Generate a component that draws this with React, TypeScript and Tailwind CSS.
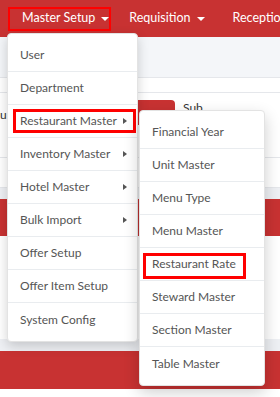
import React from "react";

const font = { fontFamily: "Lato, 'Noto Sans', sans-serif" };

function DownCaret() {
  return (
    <span className="ml-[6px] inline-block w-0 h-0 border-l-[4px] border-r-[4px] border-t-[4px] border-l-transparent border-r-transparent border-t-white" />
  );
}

function RightCaret() {
  return (
    <span className="inline-block w-0 h-0 border-t-[3.5px] border-b-[3.5px] border-l-[4px] border-t-transparent border-b-transparent border-l-[#555]" />
  );
}

const mainItems: { label: string; sub?: boolean; hl?: boolean }[] = [
  { label: "User" },
  { label: "Department" },
  { label: "Restaurant Master", sub: true, hl: true },
  { label: "Inventory Master", sub: true },
  { label: "Hotel Master", sub: true },
  { label: "Bulk Import", sub: true },
  { label: "Offer Setup" },
  { label: "Offer Item Setup" },
  { label: "System Config" },
];

const subItems: { label: string; hl?: boolean }[] = [
  { label: "Financial Year" },
  { label: "Unit Master" },
  { label: "Menu Type" },
  { label: "Menu Master" },
  { label: "Restaurant Rate", hl: true },
  { label: "Steward Master" },
  { label: "Section Master" },
  { label: "Table Master" },
];

export default function App() {
  return (
    <div className="relative w-[280px] h-[397px] overflow-hidden bg-white" style={font}>
      {/* navbar */}
      <div className="h-[37px] bg-[#c83232] flex items-center text-white text-[12.5px] whitespace-nowrap">
        <div className="ml-[8px] w-[109px] h-[24px] border-2 border-[#ff0000] flex items-center pl-[12px]">
          Master Setup
          <DownCaret />
        </div>
        <div className="ml-[18px] flex items-center">
          Requisition
          <DownCaret />
        </div>
        <div className="ml-[28px]">Reception</div>
      </div>
      {/* content background */}
      <div className="h-[40px] bg-[#f4f6f9]" />
      <div className="h-[16px] border-t border-b border-[#e5e7eb] bg-white" />
      <div className="h-[65px] bg-white border-b border-[#e5e7eb] flex items-start text-[12px] text-[#333]">
        <div className="mt-[13px] w-[130px]">ur</div>
        <div className="mt-[7px] w-[45px] h-[25px] bg-[#c83232] rounded-tr-sm" />
        <div className="mt-[6px] ml-[8px]">Sub</div>
      </div>
      <div className="h-[30px] bg-white border-b border-[#e5e7eb]" />
      <div className="h-[11px] bg-[#eef0f4]" />
      <div className="h-[37px] bg-[#c83232]" />
      <div className="h-[103px] bg-white" />
      <div className="h-[12px] bg-[#eef0f4]" />
      <div className="h-[38px] bg-[#c83232]" />

      {/* main dropdown */}
      <div className="absolute left-[7px] top-[33px] w-[131px] py-[5px] bg-white rounded-[4px] border border-[#e3e3e3] shadow-[0_4px_12px_rgba(0,0,0,0.18)]">
        {mainItems.map((it, i) => (
          <div
            key={it.label}
            className={
              "relative h-[33px] flex items-center pl-[12px] pr-[10px] text-[12px] text-[#555] whitespace-nowrap " +
              (i < mainItems.length - 1 ? "border-b border-[#e9ecef]" : "")
            }
          >
            <span className="flex-1">{it.label}</span>
            {it.sub && <RightCaret />}
            {it.hl && (
              <div className="absolute left-[5px] right-[1px] top-[4px] bottom-[4px] border-[3px] border-[#ff0000]" />
            )}
          </div>
        ))}
      </div>

      {/* submenu */}
      <div className="absolute left-[139px] top-[110px] w-[126px] py-[5px] bg-white rounded-[4px] border border-[#e3e3e3] shadow-[0_6px_16px_rgba(0,0,0,0.2)]">
        {subItems.map((it, i) => (
          <div
            key={it.label}
            className={
              "relative h-[33px] flex items-center pl-[12px] text-[12px] text-[#555] whitespace-nowrap " +
              (i < subItems.length - 1 ? "border-b border-[#e9ecef]" : "")
            }
          >
            {it.label}
            {it.hl && (
              <div className="absolute left-[3px] w-[103px] top-[5px] h-[26px] border-[3px] border-[#ff0000]" />
            )}
          </div>
        ))}
      </div>
    </div>
  );
}
